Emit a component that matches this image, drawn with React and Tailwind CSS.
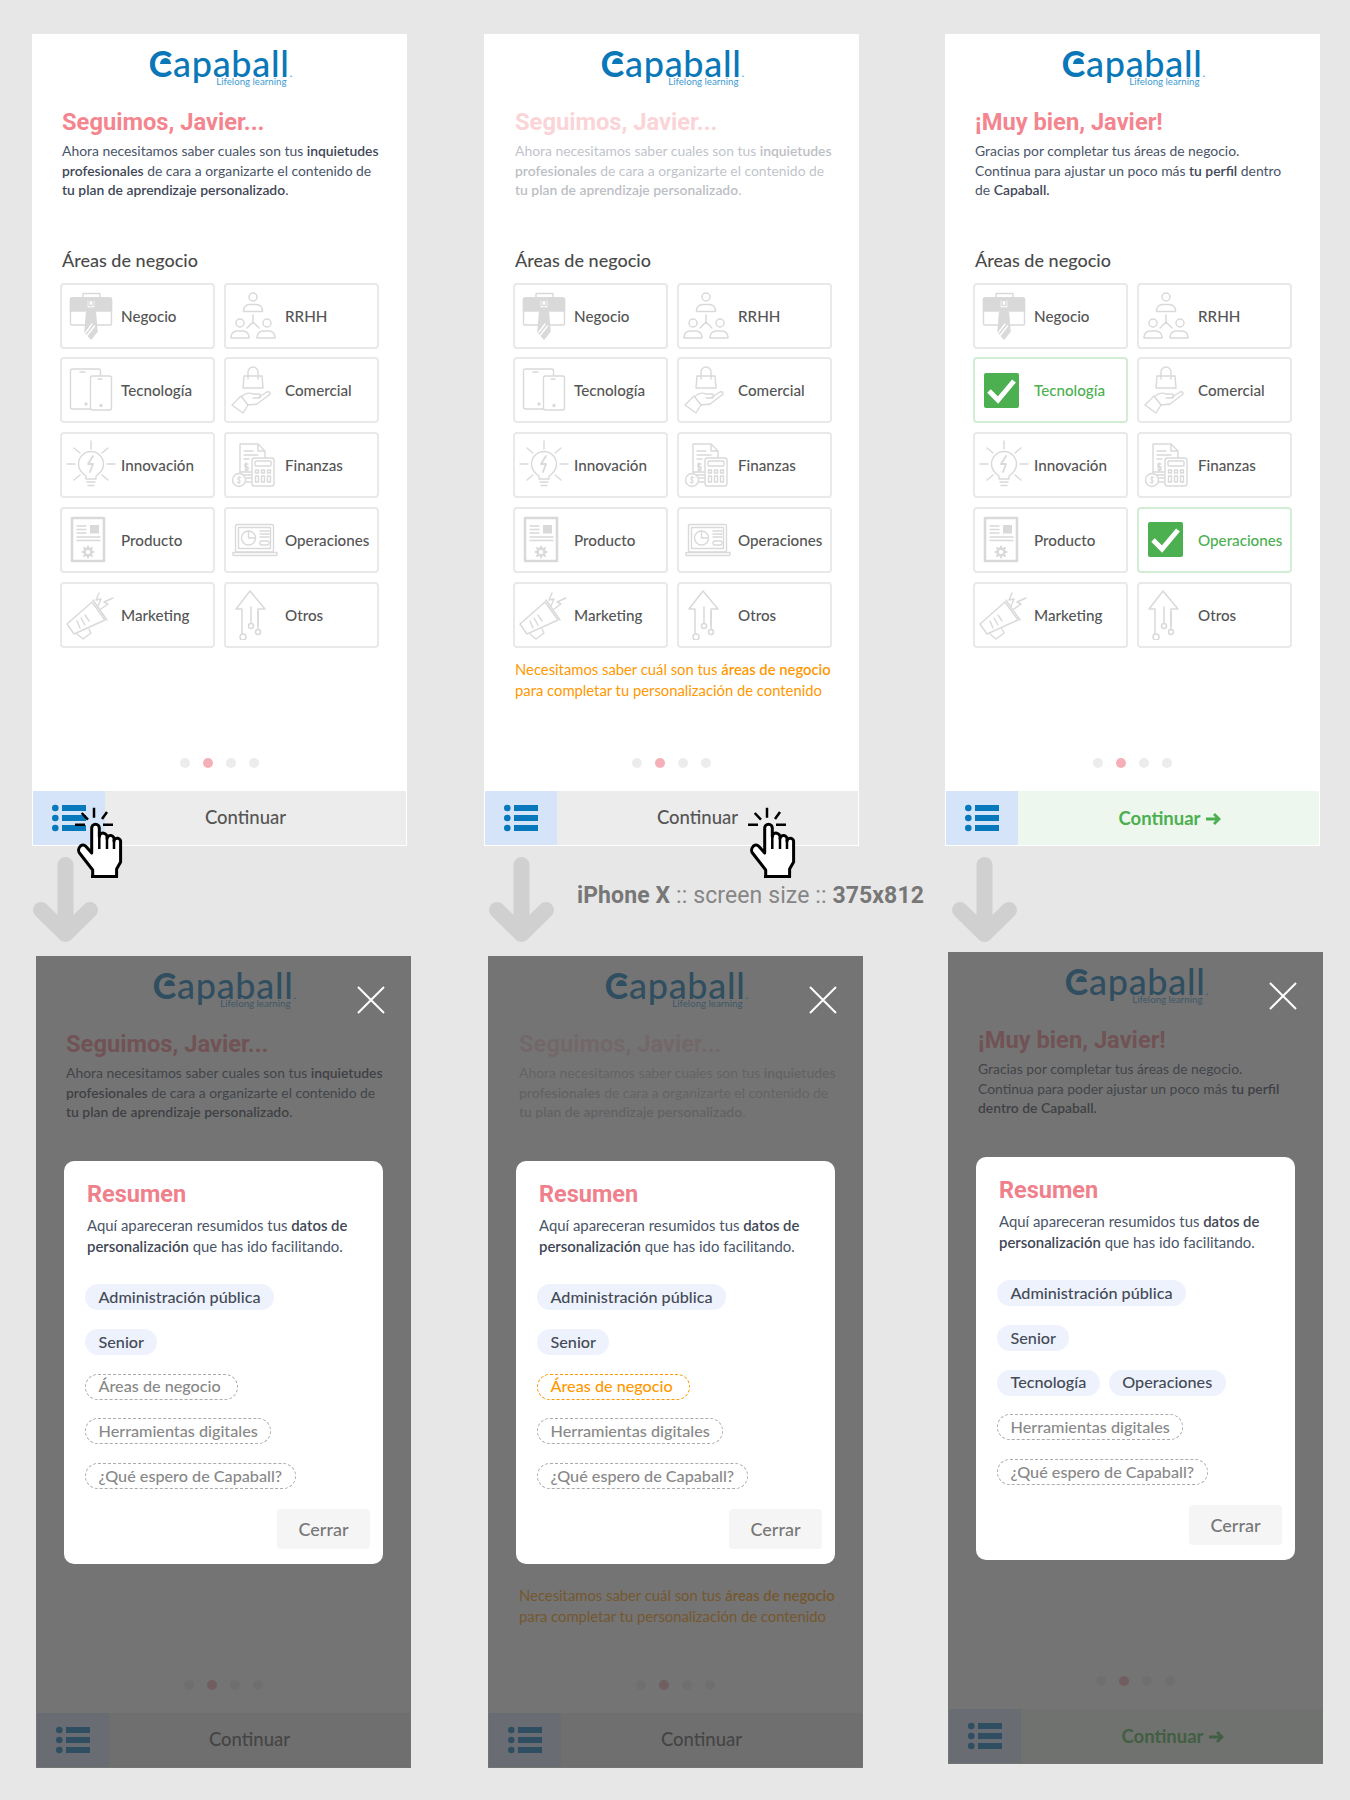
import React from "react";

const LATO = "font-['Lato',sans-serif]";
const HEAD = "font-['Roboto',sans-serif]";
const STRONG = "font-semibold text-[#3f4756]";

function Logo() {
  return (
    <div className={`relative mx-auto w-[146px] h-[40px] ${LATO}`}>
      <div className="pl-[2px] text-[36px] leading-[40px] font-medium text-[#0a78b8] tracking-[0.7px] whitespace-nowrap">
        <span className="font-bold">C</span>apaball<span className="text-[12px] text-[#5aa9d8]">.</span>
      </div>
      <svg className="absolute left-[2px] top-0" width="30" height="30" viewBox="0 0 30 30">
        <path d="M11 21 A5.500 6 0 0 1 22 21 Z" fill="#0a78b8" />
      </svg>
      <div className="absolute right-[6px] top-[32px] text-[9.7px] leading-[12px] text-[#3f9bd1] whitespace-nowrap">Lifelong learning</div>
    </div>
  );
}

const S = { stroke: "#d9d9d9", strokeWidth: 1.4, fill: "none", strokeLinecap: "round", strokeLinejoin: "round" };

function Negocio() {
  return (
    <g {...S}>
      <path d="M17 7V2.5h17V7" />
      <rect x="4.5" y="7" width="41" height="27" rx="1.5" />
      <path d="M4.500 8.500a1.500 1.500 0 0 1 1.500-1.500h38a1.500 1.500 0 0 1 1.500 1.500V20H31l-2-3H21l-2 3H4.500Z" fill="#d9d9d9" />
      <path d="M21 8.500h8v8l2 24-6 7.500-6-7.500 2-24Z" fill="#fff" />
      <path d="M21.500 17h7l2 23-5.500 7-5.500-7Z" fill="#d9d9d9" />
      <path d="M23 9.500h4v5h-4Z" fill="#fff" />
      <path d="M20 41l6-8M21.500 44l7-9" stroke="#fff" />
    </g>
  );
}

function Rrhh() {
  return (
    <g {...S} strokeWidth="1.500">
      <circle cx="23" cy="6" r="4" />
      <path d="M13.500 20.500v-1a6 6 0 0 1 6-6h7a6 6 0 0 1 6 6v1Z" />
      <circle cx="10" cy="32" r="4" />
      <circle cx="37" cy="32" r="4" />
      <path d="M1 47v-1a6 6 0 0 1 6-6h6a6 6 0 0 1 6 6v1ZM27 47v-1a6 6 0 0 1 6-6h6a6 6 0 0 1 6 6v1Z" />
      <path d="M23 24v7M23 31l-6 6M23 31l6 6" />
    </g>
  );
}

function Tecno() {
  return (
    <g {...S}>
      <rect x="4.500" y="4" width="30" height="40" rx="2" />
      <rect x="24.500" y="11" width="21" height="34" rx="2" fill="#fff" />
      <circle cx="20" cy="39" r="1" fill="#d9d9d9" />
      <circle cx="35" cy="40.500" r="1" fill="#d9d9d9" />
      <path d="M32 14h4M14 7h5" />
    </g>
  );
}

function Comercial() {
  return (
    <g {...S}>
      <path d="M14 11h18l1 12H13Z" />
      <path d="M18 14V7a5 5 0 0 1 10 0v7" />
      <path d="M10 33c5-5 9-6 13-4h6c2 0 2 4 0 4h-6M29 32l8-5c3-1 4 2 2 3l-12 9c-2 1-7 0-10 1l-3 2" />
      <path d="M2 40l9-9 7 9-5 8Z" fill="#fff" />
    </g>
  );
}

function Innov() {
  return (
    <g {...S}>
      <path d="M20 36c-3-2-7.500-5-7.500-12a12.500 12.500 0 0 1 25 0c0 7-4.500 10-7.500 12v3H20Z" />
      <path d="M21 42h8M22 45.500h6" />
      <path d="M25 1v8M1 24h8M41 24h8M8 8l6 5M42 8l-6 5M8 40l6-5M42 40l-6-5" />
      <path d="M27 16l-5 8 5 0-3 8" strokeWidth="1.800" />
    </g>
  );
}

function Finanzas() {
  return (
    <g {...S}>
      <path d="M10 36V4h18l7 7v8M28 4v7h7" />
      <path d="M14 11h9M14 15h14M14 19h5M16 23v9M18 24h-3v3h3v3h-3" />
      <rect x="22" y="18" width="22" height="28" rx="2.500" fill="#fff" />
      <rect x="25" y="21" width="16" height="5" rx="1" />
      <path d="M25.500 30h3v3h-3ZM31.500 30h3v3h-3ZM37.500 30h3v3h-3ZM25.500 36h3v6h-3ZM31.500 36h3v6h-3ZM37.500 36h3v6h-3Z" />
      <path d="M10 32h11M10 35h11M16 38h5M16 42h5" />
      <circle cx="9" cy="40" r="6.500" fill="#fff" />
      <path d="M9 36v8M11 37.500H8v2.500h2v2.500H7" strokeWidth="1" />
    </g>
  );
}

function Producto() {
  return (
    <g {...S}>
      <rect x="6" y="3" width="32" height="43" strokeWidth="2.600" />
      <path d="M11 11h9M11 14.500h9M11 18h9M11 22h23M11 25.500h23" />
      <rect x="24" y="10" width="9" height="8.500" fill="#d9d9d9" stroke="none" />
      <circle cx="22" cy="37" r="3.500" strokeWidth="2.500" />
      <path d="M22 31.500v2M22 40.500v2M16.500 37h2M25.500 37h2M18 33l1.500 1.500M24.500 39.500L26 41M26 33l-1.500 1.500M19.500 39.500L18 41" strokeWidth="2" />
    </g>
  );
}

function Operaciones() {
  return (
    <g {...S}>
      <rect x="5.500" y="9.500" width="38" height="27.500" rx="1.500" />
      <rect x="8.500" y="12.500" width="32" height="21" />
      <path d="M3 37.500h44v2a1 1 0 0 1-1 1H4a1 1 0 0 1-1-1Z" />
      <circle cx="18.500" cy="23" r="7" />
      <path d="M18.500 23v-7M18.500 23h7" />
      <path d="M30 16h9M30 19h9M30 22h9" />
      <rect x="30" y="26" width="9" height="4" rx="1.500" />
    </g>
  );
}

function Marketing() {
  return (
    <g {...S}>
      <path d="M26 12l13 18-31 14-7-10Z" fill="#fff" />
      <path d="M27 10l14 20" />
      <path d="M11 31l3 7M15 28l4 7M19 25l4 6" />
      <path d="M11 44l6 5 8-6-2-4" />
      <path d="M33 3l-3 7 5-1-3 7M47 8l-9 4 4 2-7 5" />
    </g>
  );
}

function Otros() {
  return (
    <g {...S} strokeWidth="1.500">
      <path d="M20 1L6 19h6v25M20 1l15 18h-7v17" />
      <circle cx="13" cy="47" r="3" fill="#fff" />
      <circle cx="21" cy="36" r="2.500" />
      <circle cx="28" cy="42" r="2.500" />
      <path d="M21 33V17M28 39V22" />
    </g>
  );
}

function Check() {
  return (
    <div className="ml-[9px] mr-[10px] w-[35px] h-[35px] shrink-0 rounded-[2px] bg-[#4caf50] flex items-center justify-center">
      <svg width="31" height="27" viewBox="0 0 31 27" fill="none">
        <path d="M3 14l9 9L28 4" stroke="#fff" strokeWidth="5" />
      </svg>
    </div>
  );
}

const AREAS = [
  { name: "Negocio", Icon: Negocio },
  { name: "RRHH", Icon: Rrhh },
  { name: "Tecnología", Icon: Tecno },
  { name: "Comercial", Icon: Comercial },
  { name: "Innovación", Icon: Innov },
  { name: "Finanzas", Icon: Finanzas },
  { name: "Producto", Icon: Producto },
  { name: "Operaciones", Icon: Operaciones },
  { name: "Marketing", Icon: Marketing },
  { name: "Otros", Icon: Otros },
];

function Tile({ name, Icon, on }) {
  return (
    <div className={`w-[155px] h-[66px] rounded-[4px] border-2 flex items-center ${on ? "border-[#d3ecd4]" : "border-[#e9e9e9]"}`}>
      {on ? (
        <Check />
      ) : (
        <svg className="ml-[4px] shrink-0" width="50" height="50" viewBox="0 0 50 50">
          <Icon />
        </svg>
      )}
      <span className={`ml-[5px] pt-[1px] text-[15.2px] font-medium whitespace-nowrap ${on ? "text-[#4caf50]" : "text-[#555555]"}`}>{name}</span>
    </div>
  );
}

function ListIcon() {
  return (
    <svg width="34" height="28" viewBox="0 0 34 28" fill="#0878bc">
      <circle cx="3.300" cy="4" r="3.300" />
      <circle cx="3.300" cy="14" r="3.300" />
      <circle cx="3.300" cy="24" r="3.300" />
      <rect x="10" y="1" width="24" height="6" />
      <rect x="10" y="11" width="24" height="6" />
      <rect x="10" y="21" width="24" height="6" />
    </svg>
  );
}

function Hand({ className }) {
  return (
    <svg className={`absolute ${className}`} width="48" height="71" viewBox="0 0 48 71" fill="none">
      <path d="M19 .7v10M6.700 6l6.300 6.700M32 5l-5 7M0 17.700h10M28 17.700h10" stroke="#000" strokeWidth="2.500" />
      <path d="M16.700 21a3.800 3.800 0 0 1 7.600 0v8.500a3.800 3.800 0 0 1 7.700 1v1a3.500 3.500 0 0 1 7 1v1.500a3.300 3.300 0 0 1 6.600 1V55l-4 7v8H17.700v-7L4.500 46c-1.500-2 -1-5 1-7 2-1.500 4-1 5.500.5l5.700 6.500Z" fill="#fff" stroke="#000" strokeWidth="3" strokeLinejoin="round" />
      <path d="M24.300 28v14M32 31v11M39 33v9" stroke="#000" strokeWidth="2.500" />
      <path d="M16 69.500h27" stroke="#000" strokeWidth="3" />
    </svg>
  );
}

function Arrow({ className }) {
  return (
    <svg className={`shrink-0 ${className}`} width="65" height="85" viewBox="0 0 65 85" fill="none">
      <path d="M32.500 8v69M8 53l24.500 24L57 53" stroke="#d0d0d0" strokeWidth="16" strokeLinecap="round" strokeLinejoin="round" />
    </svg>
  );
}

function Chip({ children, kind = "done" }) {
  const look = {
    done: "bg-[#edf2fd] text-[#444a55] border-transparent border",
    todo: "border border-dashed border-[#ababab] text-[#888888]",
    warn: "border border-dashed border-[#ff9800] text-[#ff9800]",
  }[kind];
  return (
    <span className={`inline-flex items-center h-[26px] px-[12.500px] rounded-full text-[16.2px] font-medium whitespace-nowrap ${look}`}>{children}</span>
  );
}

function Resumen({ chips }) {
  return (
    <>
      <div className="absolute inset-0 bg-[#3e3e3e]/72" />
      <svg className="absolute left-[321px] top-[30px]" width="28" height="28" viewBox="0 0 28 28" fill="none">
        <path d="M1 1l26 26M27 1L1 27" stroke="#fff" strokeWidth="2" />
      </svg>
      <div className={`absolute left-[28px] top-[205px] w-[319px] h-[403px] rounded-[10px] bg-white pt-[18px] px-[23px] ${LATO}`}>
        <h3 className={`${HEAD} text-[23.5px] leading-[30px] font-bold text-[#f0808b]`}>Resumen</h3>
        <p className="mt-[6px] text-[14.9px] leading-[20.5px] text-[#4a5568]">
          Aquí apareceran resumidos tus <span className={STRONG}>datos de personalización</span> que has ido facilitando.
        </p>
        <div className="mt-[28px] -ml-[2px] flex flex-col gap-y-[18.750px]">
          {chips.map((row, i) => (
            <div key={i} className="flex gap-x-[9px]">
              {row.map((c) => (
                <Chip key={c.label} kind={c.kind}>{c.label}</Chip>
              ))}
            </div>
          ))}
        </div>
        <div className="absolute right-[13px] bottom-[15px] w-[93px] h-[40px] rounded-[4px] bg-[#f5f5f5] flex items-center justify-center text-[18px] font-medium text-[#777777]">Cerrar</div>
      </div>
    </>
  );
}

function Phone({ title, text, faded, warn, selected = [], grid = true, go, hand, modal }) {
  return (
    <div className={`relative shrink-0 w-[375px] h-[812px] bg-white flex flex-col ${LATO}`}>
      <div className="pt-[9px]">
        <Logo />
      </div>
      <div className={`pr-[25px] mt-[24px] ${faded ? "opacity-35 pl-[31px]" : "pl-[30px]"}`}>
        <h2 className={`${HEAD} text-[23.7px] leading-[30px] font-bold text-[#f4858f]`}>{title}</h2>
        <p className="mt-[4px] text-[13.9px] leading-[19.500px] text-[#4a5568]">{text}</p>
      </div>
      <div className={`h-[453px] mt-[48px] pr-[25px] ${faded ? "pl-[31px]" : "pl-[30px]"}`}>
        {grid && (
          <>
            <h3 className="text-[18px] leading-[24px] font-medium text-[#4a4a4a]">Áreas de negocio</h3>
            <div className="-ml-[2px] mt-[11px] grid grid-cols-[155px_155px] gap-x-[9px] gap-y-[8.750px]">
              {AREAS.map((a) => (
                <Tile key={a.name} {...a} on={selected.includes(a.name)} />
              ))}
            </div>
          </>
        )}
        {warn && (
          <p className={`${grid ? "mt-[11px]" : "mt-[415px]"} text-[14.8px] leading-[21px] text-[#ff9800]`}>
            Necesitamos saber cuál son tus <span className="font-semibold">áreas de negocio</span> para completar tu personalización de contenido
          </p>
        )}
      </div>
      <div className="flex-1" />
      <div className="flex justify-center gap-x-[13px] mb-[22px]">
        <span className="w-[10px] h-[10px] rounded-full bg-[#ececec]" />
        <span className="w-[10px] h-[10px] rounded-full bg-[#f4b0b6]" />
        <span className="w-[10px] h-[10px] rounded-full bg-[#ececec]" />
        <span className="w-[10px] h-[10px] rounded-full bg-[#ececec]" />
      </div>
      <div className="h-[56px] flex border border-white">
        <div className="w-[72px] bg-[#d6e4fa] flex items-center justify-center">
          <ListIcon />
        </div>
        <div className={`flex-1 flex items-center justify-center text-[18.5px] font-medium ${go ? "bg-[#edf7ed] text-[#4caf50] pl-[3px] pt-[1px]" : "bg-[#ececec] text-[#555555] pr-[20px]"}`}>
          {go ? (
            <span className="flex items-center gap-x-[4px] font-bold">
              Continuar
              <svg width="17" height="14" viewBox="0 0 17 14" fill="none">
                <path d="M1 7h13M9 2l5 5-5 5" stroke="#4caf50" strokeWidth="2.800" />
              </svg>
            </span>
          ) : (
            "Continuar"
          )}
        </div>
      </div>
      {modal && <Resumen chips={modal} />}
      {hand && <Hand className={hand} />}
    </div>
  );
}

const seguimos = (
  <>
    Ahora necesitamos saber cuales son tus <span className={STRONG}>inquietudes profesionales</span> de cara a organizarte el contenido de <span className={STRONG}>tu plan de aprendizaje personalizado</span>.
  </>
);

const base = [[{ label: "Administración pública", kind: "done" }], [{ label: "Senior", kind: "done" }]];
const rest = [[{ label: "Herramientas digitales", kind: "todo" }], [{ label: "¿Qué espero de Capaball?", kind: "todo" }]];

export default function App() {
  return (
    <div className="w-[1350px] h-[1800px] bg-[#e7e7e7] overflow-hidden">
      <div className="flex pt-[34px] pl-[32px] gap-x-[77px]">
        <Phone title="Seguimos, Javier..." text={seguimos} hand="left-[43px] top-[773px]" />
        <Phone title="Seguimos, Javier..." text={seguimos} faded warn hand="left-[264px] top-[773px]" />
        <div className="ml-[9px]">
          <Phone
            title="¡Muy bien, Javier!"
            text={
              <>
                Gracias por completar tus áreas de negocio.
                <br />
                Continua para ajustar un poco más <span className={STRONG}>tu perfil</span> dentro de <span className={STRONG}>Capaball.</span>
              </>
            }
            selected={["Tecnología", "Operaciones"]}
            go
          />
        </div>
      </div>

      <div className="h-[110px] flex pl-[33px] pt-[11px]">
        <Arrow />
        <Arrow className="ml-[391px]" />
        <div className={`${HEAD} ml-[23px] w-[346px] mt-[24px] text-[23px] leading-[30px] tracking-[0.1px] text-[#868686] whitespace-nowrap`}>
          <b className="text-[#777777]">iPhone X</b> :: screen size :: <b className="text-[#777777]">375x812</b>
        </div>
        <Arrow className="ml-[29px]" />
      </div>

      <div className="flex pl-[36px] gap-x-[77px]">
        <Phone title="Seguimos, Javier..." text={seguimos} grid={false} modal={[...base, [{ label: "Áreas de negocio\u00a0", kind: "todo" }], ...rest]} />
        <Phone title="Seguimos, Javier..." text={seguimos} faded warn grid={false} modal={[...base, [{ label: "Áreas de negocio\u00a0", kind: "warn" }], ...rest]} />
        <div className="ml-[8px] -mt-[4px]">
          <Phone
            title="¡Muy bien, Javier!"
            text={
              <>
                Gracias por completar tus áreas de negocio.
                <br />
                Continua para poder ajustar un poco más <span className={STRONG}>tu perfil dentro de Capaball.</span>
              </>
            }
            grid={false}
            go
            modal={[...base, [{ label: "Tecnología", kind: "done" }, { label: "Operaciones", kind: "done" }], ...rest]}
          />
        </div>
      </div>
    </div>
  );
}
